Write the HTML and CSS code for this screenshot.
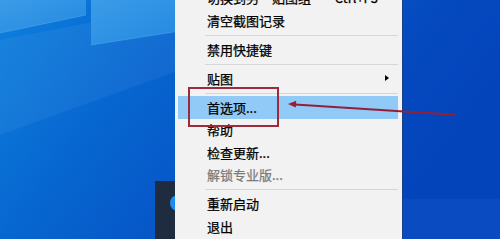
FILE: index.html
```html
<!DOCTYPE html>
<html lang="zh-CN">
<head>
<meta charset="utf-8">
<title>Snipaste 托盘菜单</title>
<link rel="stylesheet" href="styles.css">
</head>
<body>
<div class="desktop">
  <svg class="wallpaper" viewBox="0 0 500 239" width="500" height="239" aria-hidden="true">
    <defs>
      <linearGradient id="bg" x1="0" y1="0" x2="1" y2="0.35">
        <stop offset="0" stop-color="#0d80de"/>
        <stop offset="0.33" stop-color="#0766d0"/>
        <stop offset="0.8" stop-color="#0549bf"/>
        <stop offset="1" stop-color="#0444bb"/>
      </linearGradient>
      <linearGradient id="pane" x1="0" y1="0" x2="1" y2="1">
        <stop offset="0" stop-color="#3b9ce8"/>
        <stop offset="1" stop-color="#2388df"/>
      </linearGradient>
    </defs>
    <rect width="500" height="239" fill="url(#bg)"/>
    <polygon points="0,40 180,5 180,70 0,135" fill="#ffffff" opacity="0.05"/>
    <polygon points="0,0 86,0 86,15 0,33" fill="url(#pane)"/>
    <polygon points="91,0 180,0 180,31 91,45" fill="url(#pane)"/>
    <line x1="0" y1="33" x2="86" y2="15" stroke="#6fb8f0" stroke-width="0.6" opacity="0.6"/>
    <line x1="91" y1="45" x2="180" y2="31" stroke="#6fb8f0" stroke-width="0.6" opacity="0.6"/>
    <rect x="400" y="199" width="100" height="40" fill="#0a4bc2"/>
  </svg>

  <div class="tray-panel">
    <span class="tray-icon">✕</span>
  </div>

  <div class="menu">
    <div class="item"><span class="label">切换到另一贴图组</span><span class="key">Ctrl+F3</span></div>
    <div class="item"><span class="label">清空截图记录</span></div>
    <div class="sep"></div>
    <div class="item"><span class="label">禁用快捷键</span></div>
    <div class="sep"></div>
    <div class="item"><span class="label">贴图</span><span class="sub-arrow"></span></div>
    <div class="sep"></div>
    <div class="item active"><span class="label">首选项...</span></div>
    <div class="item"><span class="label">帮助</span></div>
    <div class="item"><span class="label">检查更新...</span></div>
    <div class="item disabled"><span class="label">解锁专业版...</span></div>
    <div class="sep"></div>
    <div class="item"><span class="label">重新启动</span></div>
    <div class="item"><span class="label">退出</span></div>
  </div>

  <div class="callout-box"></div>
  <svg class="annotation" viewBox="0 0 500 239" width="500" height="239" aria-hidden="true">
    <line x1="455" y1="114.8" x2="295" y2="104.4" stroke="#951f38" stroke-width="2"/>
    <polygon points="288,104 296.2,100.8 295.8,107.6" fill="#951f38"/>
  </svg>
</div>
</body>
</html>
```

FILE: styles.css
```css
html, body {
  margin: 0;
  padding: 0;
  background: #0444bb;
}

body {
  overflow: hidden;
  font-family: "Noto Sans CJK SC", "Noto Sans", sans-serif;
}

.desktop {
  position: relative;
  width: 500px;
  height: 239px;
  overflow: hidden;
}

.wallpaper {
  position: absolute;
  left: 0;
  top: 0;
  display: block;
}

.tray-panel {
  position: absolute;
  left: 155px;
  top: 181px;
  width: 30px;
  height: 58px;
  background: #1f2c3f;
}

.tray-icon {
  position: absolute;
  left: 15px;
  top: 14px;
  width: 16px;
  height: 16px;
  border-radius: 50%;
  background: #1b8cf4;
  color: #ffffff;
  font-size: 9px;
  line-height: 16px;
  text-align: center;
}

.menu {
  position: absolute;
  left: 175px;
  top: -16.5px;
  width: 220px;
  padding: 3px 4px 3px 3px;
  background: #f2f2f2;
  box-shadow: 1px 0 0 rgba(40, 60, 90, 0.55);
  font-size: 13px;
  color: #000000;
  -webkit-text-stroke: 0.25px currentColor;
}

.item {
  display: flex;
  align-items: center;
  height: 22.5px;
  padding: 0 9px 0 29px;
  line-height: 22.5px;
  white-space: nowrap;
}

.item .label {
  flex: 1;
  padding-top: 1px;
}

.item .key {
  margin-right: 11px;
  padding-top: 1px;
}

.item.active {
  background: #91c9f7;
}

.item.disabled {
  color: #7b7b7b;
}

.sub-arrow {
  width: 0;
  height: 0;
  border-left: 4px solid #000000;
  border-top: 3.5px solid transparent;
  border-bottom: 3.5px solid transparent;
}

.sep {
  height: 1px;
  margin: 3px 0 2.5px 27px;
  background: #d6d6d6;
}

.callout-box {
  position: absolute;
  left: 188px;
  top: 87px;
  width: 87px;
  height: 36px;
  border: 2px solid #9e2b3c;
}

.annotation {
  position: absolute;
  left: 0;
  top: 0;
  display: block;
  pointer-events: none;
}
```
